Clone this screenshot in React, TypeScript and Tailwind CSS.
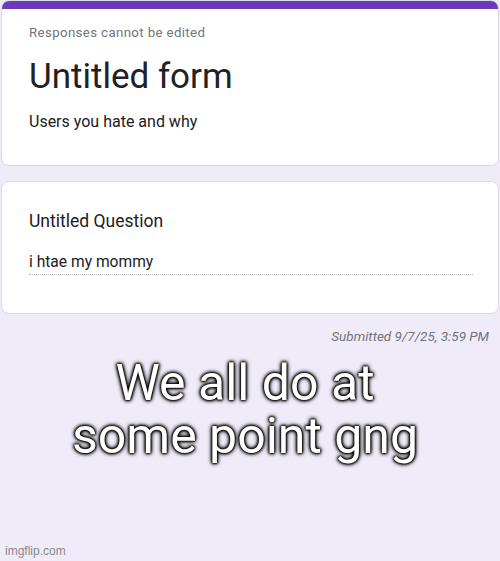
export default function App() {
  return (
    <div className="relative flex h-[561px] w-[500px] flex-col bg-[#f0ebf8] px-px font-['Roboto',sans-serif]">
      {/* Header card */}
      <div className="h-[166px] overflow-hidden rounded-lg border border-[#dadce0] bg-white">
        <div className="h-2 bg-[#6f39bf]" />
        <div className="px-[27px] pt-[14px]">
          <p className="text-[13.3px] leading-[20px] tracking-[0.35px] text-[#70757a]">
            Responses cannot be edited
          </p>
          <h1 className="mt-[14px] text-[35px] leading-[40px] text-[#202124]">Untitled form</h1>
          <p className="mt-[13px] text-[16px] leading-[24px] text-[#202124]">Users you hate and why</p>
        </div>
      </div>

      {/* Question card */}
      <div className="mt-[15px] h-[133px] rounded-lg border border-[#dadce0] bg-white px-[27px] pt-[27px]">
        <p className="text-[17.5px] leading-[24px] text-[#202124]">Untitled Question</p>
        <div className="mt-[19px] w-[444px] border-b border-dotted border-[#b0b3b8] pb-[2px]">
          <p className="text-[15.6px] leading-[20px] text-[#202124]">i htae my mommy</p>
        </div>
      </div>

      <p className="mt-[12px] pr-[10px] text-right text-[13.5px] italic leading-[20px] text-[#70757a]">
        Submitted 9/7/25, 3:59 PM
      </p>

      {/* Caption */}
      <div className="mt-[11px] flex flex-col items-center pr-[10px] text-[50px] leading-[53px] text-white [text-shadow:0_0_2px_#000,0_0_2px_#000,0_0_3px_#000,0_0_4px_#000,0_0_5px_#000]">
        <span>We all do at</span>
        <span>some point gng</span>
      </div>

      <p className="absolute bottom-[3px] left-[5px] text-[12px] leading-[14px] text-[#8a8a8a] font-['Liberation_Sans',sans-serif]">
        imgflip.com
      </p>
    </div>
  );
}
